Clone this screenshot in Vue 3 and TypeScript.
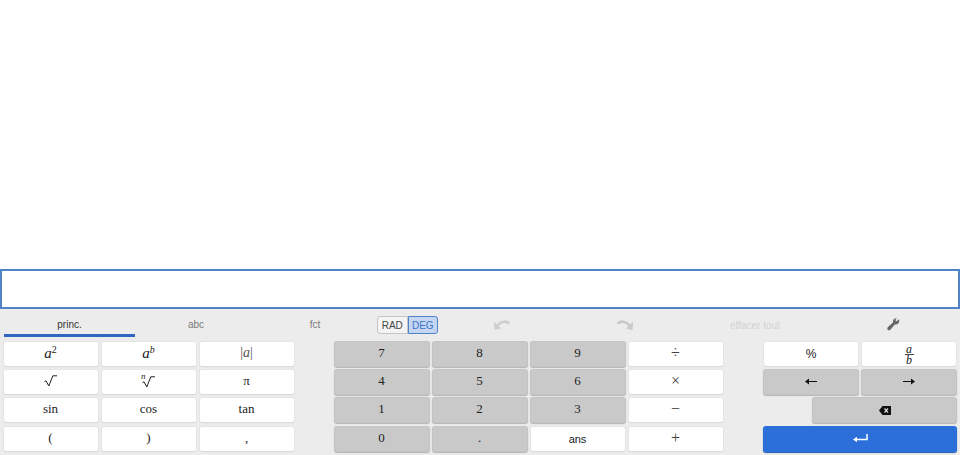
<script setup lang="ts">
type Key = { label: string; tone?: 'dark' | 'light'; type?: string };

const tabs = ['princ.', 'abc', 'fct'];

const left: Key[] = [
  { label: 'a2', type: 'square' }, { label: 'ab', type: 'power' }, { label: 'abs', type: 'abs' },
  { label: 'sqrt', type: 'sqrt' }, { label: 'nroot', type: 'nroot' }, { label: 'π' },
  { label: 'sin' }, { label: 'cos' }, { label: 'tan' },
  { label: '(' }, { label: ')' }, { label: ',' },
];

const center: Key[] = [
  { label: '7', tone: 'dark' }, { label: '8', tone: 'dark' }, { label: '9', tone: 'dark' }, { label: '÷', type: 'op' },
  { label: '4', tone: 'dark' }, { label: '5', tone: 'dark' }, { label: '6', tone: 'dark' }, { label: '×', type: 'op' },
  { label: '1', tone: 'dark' }, { label: '2', tone: 'dark' }, { label: '3', tone: 'dark' }, { label: '−', type: 'op' },
  { label: '0', tone: 'dark' }, { label: '.', tone: 'dark' }, { label: 'ans', type: 'ans' }, { label: '+', type: 'op' },
];
</script>

<template>
  <div class="page">
    <div class="spacer"></div>
    <div class="entry"></div>
    <section class="panel">
      <div class="toolbar">
        <div
          v-for="(tab, i) in tabs"
          :key="tab"
          class="tab"
          :class="['tab-' + i, { active: i === 0 }]"
        >{{ tab }}</div>
        <div class="mode">
          <span class="mode-item">RAD</span>
          <span class="mode-item on">DEG</span>
        </div>
        <div class="tool tool-undo">
          <svg width="16" height="10" viewBox="0 0 16 10">
            <path d="M15.500 3.500C12 .5 7 1 3.500 5.500" fill="none" stroke="#cfcfcf" stroke-width="2.600" />
            <path d="M0 1.500 7 8.500 .5 10Z" fill="#cfcfcf" />
          </svg>
        </div>
        <div class="tool tool-redo">
          <svg width="16" height="10" viewBox="0 0 16 10">
            <path d="M.5 3.500C4 .5 9 1 12.500 5.500" fill="none" stroke="#c9c9c9" stroke-width="2.600" />
            <path d="M16 1.500 9 8.500 15.500 10Z" fill="#c9c9c9" />
          </svg>
        </div>
        <div class="tool tool-clear">effacer tout</div>
        <div class="tool tool-wrench">
          <svg width="13" height="13" viewBox="0 0 14 14"><path d="M13 1.400 10.400 3.400 9.300 3 9.200 1.600 10.800.4C8.800-.2 6.800 1 6.500 3c-.1.700 0 1.200.2 1.700L1 9.800c-.9.900-.8 2.100-.2 2.900.8.800 2 .8 2.800 0l4.900-5.700c2.700.7 5.500-1.800 4.500-5.600Z" fill="#666" /></svg>
        </div>
      </div>

      <div class="pad">
        <div class="group group-left">
          <button v-for="k in left" :key="k.label" type="button" class="key">
            <span v-if="k.type === 'square'" class="math"><i>a</i><sup>2</sup></span>
            <span v-else-if="k.type === 'power'" class="math"><i>a</i><sup><i>b</i></sup></span>
            <span v-else-if="k.type === 'abs'" class="math abs">|<i>a</i>|</span>
            <svg v-else-if="k.type === 'sqrt'" width="13" height="12" viewBox="0 0 13 12"><path d="M.5 6.500 2 5.800 4.800 11 8.800.8H13" fill="none" stroke="#222" stroke-width="1" /></svg>
            <span v-else-if="k.type === 'nroot'" class="nroot">
              <i>n</i>
              <svg width="13" height="12" viewBox="0 0 13 12"><path d="M.5 6.500 2 5.800 4.800 11 8.800.8H13" fill="none" stroke="#222" stroke-width="1" /></svg>
            </span>
            <template v-else>{{ k.label }}</template>
          </button>
        </div>

        <div class="group group-center">
          <button
            v-for="k in center"
            :key="k.label"
            type="button"
            class="key"
            :class="{ dark: k.tone === 'dark', sans: k.type === 'ans', op: k.type === 'op' }"
          >{{ k.label }}</button>
        </div>

        <div class="group group-right">
          <button type="button" class="key percent">%</button>
          <button type="button" class="key frac-key">
            <span class="frac"><i>a</i><i class="den">b</i></span>
          </button>
          <button type="button" class="key dark">
            <svg width="12" height="7" viewBox="0 0 12 7"><path d="M0 3.500 4 .5V3H12V4H4V6.500Z" fill="#111" /></svg>
          </button>
          <button type="button" class="key dark">
            <svg width="12" height="7" viewBox="0 0 12 7"><path d="M12 3.500 8 .5V3H0V4H8V6.500Z" fill="#111" /></svg>
          </button>
          <button type="button" class="key dark back">
            <svg width="12" height="9" viewBox="0 0 12 9"><path d="M3.500 0H12V9H3.500L0 4.500Z" fill="#111" /><path d="M5.500 2.500 9 6.500M9 2.500 5.500 6.500" stroke="#ddd" stroke-width="1.200" /></svg>
          </button>
          <button type="button" class="key enter">
            <svg width="15" height="9" viewBox="0 0 15 9"><path d="M14 0V5.500H3" fill="none" stroke="#fff" stroke-width="1.500" /><path d="M0 5.500 4 2.800V8.200Z" fill="#fff" /></svg>
          </button>
        </div>
      </div>
    </section>
  </div>
</template>

<style scoped>
.page {
  width: 960px;
  height: 455px;
  display: flex;
  flex-direction: column;
  background: #fff;
  overflow: hidden;
}
.spacer { height: 269px; flex: none; }
.entry {
  height: 40px;
  flex: none;
  box-sizing: border-box;
  border: 2px solid #4f83c6;
  background: #fff;
}
.panel {
  flex: 1;
  background: #ececec;
  display: flex;
  flex-direction: column;
  opacity: 0.999;
}
.toolbar {
  height: 33px;
  flex: none;
  display: flex;
  padding-left: 4px;
  box-sizing: border-box;
  font-family: "Liberation Sans", Arial, sans-serif;
  font-size: 10px;
}
.tab {
  box-sizing: border-box;
  height: 28px;
  flex: none;
  display: flex;
  align-items: center;
  justify-content: center;
  color: #7a7a7a;
  padding-top: 2px;
}
.tab-0 { width: 131px; }
.tab-1 { width: 122px; }
.tab-2 { width: 116px; }
.tab.active {
  color: #333;
  border-bottom: 3px solid #2f66c4;
  padding-top: 5px;
}
.mode {
  display: flex;
  height: 18px;
  margin: 7px 0 0 4px;
  width: 61px;
  flex: none;
  color: #444;
  font-size: 10px;
}
.mode-item {
  flex: 1;
  display: flex;
  align-items: center;
  justify-content: center;
  background: #f4f4f4;
  border: 1px solid #c4c4c4;
  border-radius: 3px 0 0 3px;
}
.mode-item.on {
  background: #c4d6f2;
  border-color: #4f83c6;
  border-radius: 0 3px 3px 0;
  color: #3e74c8;
}
.tool {
  display: flex;
  align-items: center;
  justify-content: center;
  height: 30px;
  flex: none;
  box-sizing: border-box;
}
.tool-undo { width: 128px; padding-top: 2px; }
.tool-redo { width: 117px; padding-top: 2px; }
.tool-clear { width: 144px; color: #d2d2d2; padding-top: 2px; }
.tool-wrench { width: 132px; }
.pad {
  display: flex;
  padding-left: 3.500px;
  font-family: "Liberation Serif", "Times New Roman", serif;
  font-size: 13px;
  color: #222;
}
.group {
  display: grid;
  grid-template-rows: repeat(4, 24px);
  row-gap: 4.200px;
  column-gap: 4px;
}
.group-left { grid-template-columns: repeat(3, 94px); }
.group-center { grid-template-columns: repeat(4, 94px); margin-left: 41px; }
.group-right { grid-template-columns: repeat(2, 94px); margin-left: 41.500px; }
.key {
  appearance: none;
  border: 0;
  margin: 0;
  padding: 0 0 2px;
  background: #fff;
  border-radius: 2px;
  box-shadow: 0 1px 1px #d8d8d8, 0 0 0 1px #e6e6e6;
  color: inherit;
  font: inherit;
  display: flex;
  align-items: center;
  justify-content: center;
}
.key.dark {
  background: #c9c9c9;
  box-shadow: 0 0 0 1px #c4c4c4, 0 1px 1px 1px #b5b5b5;
}
.key.op { font-size: 16px; color: #444; }
.key.sans { font-family: "Liberation Sans", Arial, sans-serif; font-size: 11px; padding-bottom: 0; }
.key.percent { font-family: "Liberation Sans", Arial, sans-serif; font-size: 12px; padding-bottom: 0; }
.key.frac-key { padding-bottom: 0; }
.key.back { grid-column: 1 / 3; margin-left: 49px; padding-bottom: 0; }
.key.enter { grid-column: 1 / 3; background: #2c6fdb; box-shadow: 0 0 0 1px #2c6fdb, 0 1px 1px 1px #1f57ad; padding-bottom: 0; }
.math { font-size: 15px; }
.math sup { font-size: 10px; line-height: 0; vertical-align: 5px; }
.abs { color: #555; font-size: 14px; }
.nroot { position: relative; display: flex; margin-top: 2px; }
.nroot i { position: absolute; left: -1px; top: -5px; font-size: 9px; }
.frac {
  display: flex;
  flex-direction: column;
  align-items: center;
  font-size: 12px;
  line-height: 10px;
}
.frac .den { border-top: 1px solid #444; width: 9px; text-align: center; }
</style>
